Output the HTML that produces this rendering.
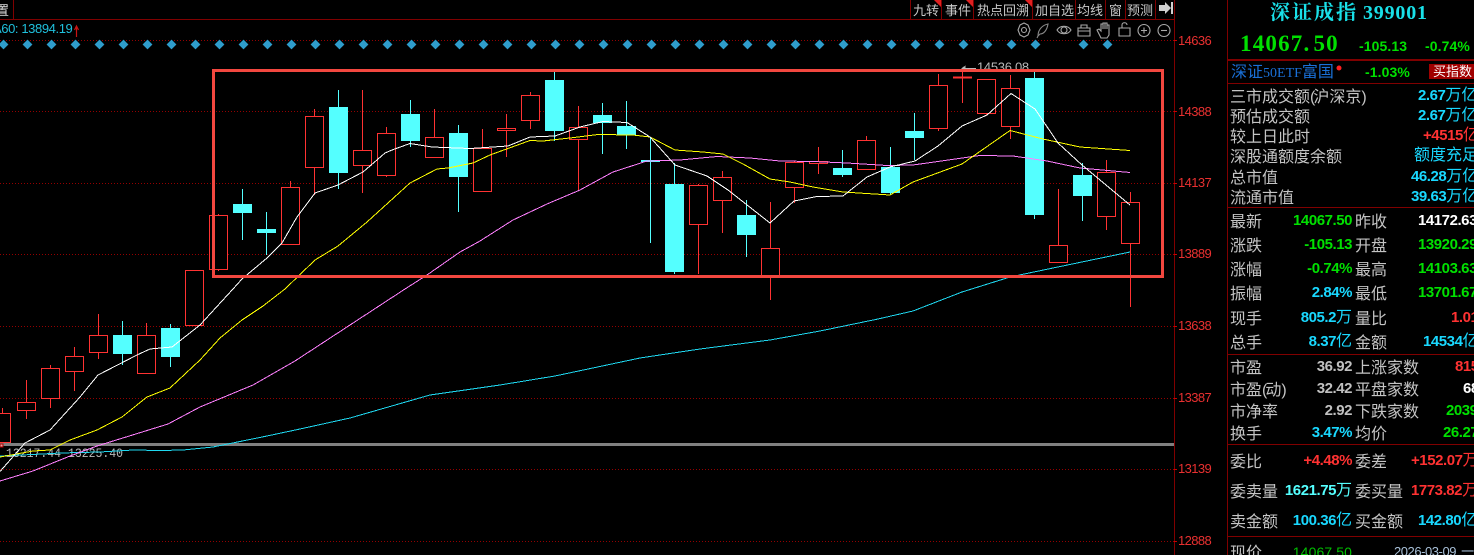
<!DOCTYPE html>
<html><head><meta charset="utf-8"><style>
html,body{margin:0;padding:0;background:#000;width:1474px;height:555px;overflow:hidden}
#p{position:relative;width:1474px;height:555px;overflow:hidden;background:#000;font-family:"Liberation Sans","WenQuanYi Zen Hei","Noto Sans CJK SC",sans-serif}
svg{position:absolute;left:0;top:0}
.t,.l,.v,.w{position:absolute;white-space:nowrap;line-height:18px;height:18px}
.t{font-size:13px;color:#c8c8c8;top:2px}
.l{left:1230px;font-size:16px;color:#c4c4c4;margin-top:2px}
.l u{text-decoration:none;letter-spacing:-2px}
.m{left:1355px}
.v,.w{font-size:15px;font-weight:bold;letter-spacing:-.45px}
.v{right:122px}
.v i,.w i{font-style:normal;font-weight:normal;font-size:16px;letter-spacing:0}
.a{position:absolute;left:1178px;font-size:13px;letter-spacing:-.6px;color:#e83030;line-height:14px}
.g{color:#00e000}.c{color:#19d8ff}.r{color:#ff3232}.s{color:#c0c0c0}.k{color:#fff}.q{color:#55ffff}
</style></head><body><div id="p">
<svg width="1474" height="555" viewBox="0 0 1474 555">
<g stroke="#940000" stroke-dasharray="1 2" shape-rendering="crispEdges">
<path d="M0 40.500H1174M0 111.500H1174M0 183.500H1174M0 254.500H1174M0 326.500H1174M0 398.500H1174M0 469.500H1174M0 541.500H1174"/>
</g>
<path fill="#2f9ccb" stroke="#2f9ccb" stroke-width=".6" d="M3.500 40l4.500 4.500-4.500 4.500-4.500-4.500zM27.500 40l4.500 4.500-4.500 4.500-4.500-4.500zM51.500 40l4.500 4.500-4.500 4.500-4.500-4.500zM75.500 40l4.500 4.500-4.500 4.500-4.500-4.500zM99.500 40l4.500 4.500-4.500 4.500-4.500-4.500zM123.500 40l4.500 4.500-4.500 4.500-4.500-4.500zM147.500 40l4.500 4.500-4.500 4.500-4.500-4.500zM171.500 40l4.500 4.500-4.500 4.500-4.500-4.500zM195.500 40l4.500 4.500-4.500 4.500-4.500-4.500zM219.500 40l4.500 4.500-4.500 4.500-4.500-4.500zM243.500 40l4.500 4.500-4.500 4.500-4.500-4.500zM267.500 40l4.500 4.500-4.500 4.500-4.500-4.500zM291.500 40l4.500 4.500-4.500 4.500-4.500-4.500zM315.500 40l4.500 4.500-4.500 4.500-4.500-4.500zM339.500 40l4.500 4.500-4.500 4.500-4.500-4.500zM363.500 40l4.500 4.500-4.500 4.500-4.500-4.500zM387.500 40l4.500 4.500-4.500 4.500-4.500-4.500zM411.500 40l4.500 4.500-4.500 4.500-4.500-4.500zM435.500 40l4.500 4.500-4.500 4.500-4.500-4.500zM459.500 40l4.500 4.500-4.500 4.500-4.500-4.500zM483.500 40l4.500 4.500-4.500 4.500-4.500-4.500zM507.500 40l4.500 4.500-4.500 4.500-4.500-4.500zM531.500 40l4.500 4.500-4.500 4.500-4.500-4.500zM555.500 40l4.500 4.500-4.500 4.500-4.500-4.500zM579.500 40l4.500 4.500-4.500 4.500-4.500-4.500zM603.500 40l4.500 4.500-4.500 4.500-4.500-4.500zM627.500 40l4.500 4.500-4.500 4.500-4.500-4.500zM651.500 40l4.500 4.500-4.500 4.500-4.500-4.500zM675.500 40l4.500 4.500-4.500 4.500-4.500-4.500zM699.500 40l4.500 4.500-4.500 4.500-4.500-4.500zM723.500 40l4.500 4.500-4.500 4.500-4.500-4.500zM747.500 40l4.500 4.500-4.500 4.500-4.500-4.500zM771.500 40l4.500 4.500-4.500 4.500-4.500-4.500zM795.500 40l4.500 4.500-4.500 4.500-4.500-4.500zM819.500 40l4.500 4.500-4.500 4.500-4.500-4.500zM843.500 40l4.500 4.500-4.500 4.500-4.500-4.500zM867.500 40l4.500 4.500-4.500 4.500-4.500-4.500zM891.500 40l4.500 4.500-4.500 4.500-4.500-4.500zM915.500 40l4.500 4.500-4.500 4.500-4.500-4.500zM939.500 40l4.500 4.500-4.500 4.500-4.500-4.500zM963.500 40l4.500 4.500-4.500 4.500-4.500-4.500zM987.500 40l4.500 4.500-4.500 4.500-4.500-4.500zM1011.500 40l4.500 4.500-4.500 4.500-4.500-4.500zM1035.500 40l4.500 4.500-4.500 4.500-4.500-4.500zM1083.500 40l4.500 4.500-4.500 4.500-4.500-4.500zM1107.500 40l4.500 4.500-4.500 4.500-4.500-4.500z"/>

<rect x="0" y="443" width="1174" height="3" fill="#808080"/>
<text x="6" y="457" font-family="Liberation Mono,monospace" font-size="13" fill="#b8b8b8" textLength="117" lengthAdjust="spacingAndGlyphs">13217.44 13225.40</text>
<rect x="0" y="444" width="3" height="3" fill="#e8a0a0" stroke="#a00" stroke-width="1" shape-rendering="crispEdges"/>
<text x="977" y="71.500" font-family="Liberation Sans,sans-serif" font-size="13" letter-spacing="-.3" fill="#b8b8b8">14536.08</text>
<path d="M962 68.500h14M962 68.500l3-2v4z" stroke="#b8b8b8" fill="#b8b8b8" shape-rendering="crispEdges"/>

<path stroke="#ff3232" fill="none" shape-rendering="crispEdges" d="M2.500 408V443M26.500 380V419M50.500 365V408M74.500 347V391M98.500 314V359M146.500 323V374M218.500 214V271M290.500 181V244M314.500 109V195M362.500 90V193M386.500 127V177M434.500 109V158M482.500 129V191M506.500 114V157M530.500 92V129M578.500 106V191M698.500 184V274M722.500 171V233M770.500 202V300M794.500 161V203M818.500 147V174M866.500 136V170M938.500 74V131M962.500 70V103M986.500 79V115M1010.500 75V139M1058.500 189V262M1106.500 160V230M1130.500 192V307"/>
<g fill="#000" stroke="#ff3232" shape-rendering="crispEdges">
<rect x="-7.500" y="413.500" width="18" height="29"/><rect x="17.500" y="402.500" width="18" height="8"/><rect x="41.500" y="368.500" width="18" height="30"/><rect x="65.500" y="356.500" width="18" height="15"/><rect x="89.500" y="335.500" width="18" height="17"/><rect x="137.500" y="335.500" width="18" height="38"/><rect x="185.500" y="270.500" width="18" height="55"/><rect x="209.500" y="215.500" width="18" height="54"/><rect x="281.500" y="187.500" width="18" height="57"/><rect x="305.500" y="116.500" width="18" height="51"/><rect x="353.500" y="150.500" width="18" height="15"/><rect x="377.500" y="133.500" width="18" height="42"/><rect x="425.500" y="137.500" width="18" height="20"/><rect x="473.500" y="148.500" width="18" height="43"/><rect x="497.500" y="128.500" width="18" height="2"/><rect x="521.500" y="95.500" width="18" height="25"/><rect x="569.500" y="127.500" width="18" height="12"/><rect x="689.500" y="185.500" width="18" height="39"/><rect x="713.500" y="177.500" width="18" height="23"/><rect x="761.500" y="248.500" width="18" height="28"/><rect x="785.500" y="162.500" width="18" height="25"/><rect x="809.500" y="161.500" width="18" height="2"/><rect x="857.500" y="140.500" width="18" height="29"/><rect x="929.500" y="85.500" width="18" height="43"/><rect x="953.500" y="77" width="18" height="1" /><rect x="977.500" y="79.500" width="18" height="34"/><rect x="1001.500" y="88.500" width="18" height="38"/><rect x="1049.500" y="245.500" width="18" height="17"/><rect x="1097.500" y="172.500" width="18" height="44"/><rect x="1121.500" y="202.500" width="18" height="41"/>
</g>
<path stroke="#54ffff" fill="none" shape-rendering="crispEdges" d="M122.500 321V365M170.500 324V367M242.500 189V240M266.500 212V255M338.500 90V189M410.500 100V147M458.500 125V212M554.500 72V141M602.500 103V154M626.500 101V149M650.500 137V243M674.500 163V274M746.500 200V257M842.500 150V177M890.500 147V195M914.500 113V160M1034.500 72V219M1082.500 163V221"/>
<g fill="#54ffff" shape-rendering="crispEdges">
<rect x="113" y="335" width="19" height="19"/><rect x="161" y="328" width="19" height="29"/><rect x="233" y="204" width="19" height="9"/><rect x="257" y="229" width="19" height="4"/><rect x="329" y="107" width="19" height="66"/><rect x="401" y="114" width="19" height="27"/><rect x="449" y="133" width="19" height="44"/><rect x="545" y="80" width="19" height="51"/><rect x="593" y="115" width="19" height="8"/><rect x="617" y="126" width="19" height="9"/><rect x="641" y="160" width="19" height="2"/><rect x="665" y="184" width="19" height="88"/><rect x="737" y="215" width="19" height="20"/><rect x="833" y="168" width="19" height="7"/><rect x="881" y="167" width="19" height="26"/><rect x="905" y="131" width="19" height="7"/><rect x="1025" y="78" width="19" height="137"/><rect x="1073" y="175" width="19" height="21"/>
</g>
<g fill="none" shape-rendering="crispEdges">
<polyline stroke="#1fd8f0" points="0,456 43,454 60,453 100,452 133,450 160,450.500 183,450 213,447 267,436 300,429 350,418 430,395 500,385 555,376 640,358 700,349 770,340 820,331 878,319 913,311 962,292 1010,277 1053,268 1130,252"/>
<polyline stroke="#ff80ff" points="0,481 33,471 70,456 97,446 168,424 200,407 253,385 295,361 350,325 405,289 427,275 460,252 480,241 513,220 547,204 580,190 613,172 647,161 680,160 717,156.500 750,158 780,161 813,161.500 847,163 887,165.500 913,165 980,155.500 1013,156 1047,161 1080,168 1130,172.500"/>
<polyline stroke="#ffff00" points="0,457 33,451 50,450 70,440 97,430 122,417 147,397 170,388 200,360 220,338 242,320 263,306 285,289 315,260 338,246 367,222 410,183 437,169 448,168 473,163 490,155 530,140.500 543,141 570,138 598,134.500 633,135 650,137 675,150 703,152 723,154 743,164 770,179 790,182 813,187 843,192 890,195 913,182 962,164 1010,130.500 1043,139 1080,147 1130,150.500"/>
<polyline stroke="#ffffff" points="0,471.500 25,443 50,430 80,397 98,375 137,355 150,349 172,347 200,325 233,289 242,279 267,258 282,243 297,217 315,193 338,185 363,172 385,153 392,150 410,143.500 432,147 470,148.500 508,146 530,137 555,136 580,127 603,121.500 627,122.500 650,137 675,165 707,176 728,190 770,223 794,201 817,196.500 843,196 867,177 890,167 915,161 938,146 962,126 987,115 1011,93.500 1035,109 1058,143 1082,165 1130,205"/>
</g>
<rect x="213.500" y="70.500" width="949" height="206" fill="none" stroke="#f2473f" stroke-width="3"/>

<g stroke="#800000" fill="none" shape-rendering="crispEdges">
<path d="M0 19.500H1174M13.500 0V19M910.500 0V19M941.500 0V19M973.500 0V19M1032.500 0V19M1075.500 0V19M1105.500 0V19M1125.500 0V19M1155.500 0V19M1174.500 0V555M1227.500 0V555M1228 59.500H1474M1228 60.500H1474M1228 83.500H1474M1228 207.500H1474M1228 354.500H1474M1228 444.500H1474M1228 536.500H1474"/>
</g>
<path fill="#e02020" d="M934 0h7v7zM966 0h7v7zM1025 0h7v7z"/>
<path fill="#d0d0d0" d="M1159 5h6V2l6 6-6 6v-3h-6zM1171 2h2v12h-2z"/>
<path fill="#c00" d="M1174 40h3v1h-3zM1174 111h3v1h-3zM1174 183h3v1h-3zM1174 254h3v1h-3zM1174 326h3v1h-3zM1174 398h3v1h-3zM1174 469h3v1h-3zM1174 541h3v1h-3z"/>
<path d="M76.500 27V37M74.500 30l2-4 2 4" stroke="#c81414" stroke-width="1.200" fill="none"/>
<g fill="none" stroke="#a8a8a8" stroke-width="1.100">
<path d="M1020 25l4-2 4 2 2 5-2 5-4 2-4-2-2-5z"/><circle cx="1024" cy="30" r="2.500"/>
<path d="M1038 36c0-7 5-11 10-12-1 6-4 10-8 10zM1038 36l-1 2" stroke="#888"/>
<path d="M1057 30c3-5 11-5 14 0-3 5-11 5-14 0z"/><circle cx="1064" cy="30" r="3"/>
<path d="M1078 28h12v8h-12zM1081 28v-3h6v3M1078 31h12"/>
<path d="M1100 36l-3-6 2-1 2 2v-7h2v5-6h2v6-6h2v6-4h2v10l-2 3h-6z"/>
<path d="M1119 28h11v8h-11zM1122 28v-3c0-3 5-3 5 0"/>
<circle cx="1144" cy="30.500" r="6"/><path d="M1141 30.500h6M1144 27.500v6"/>
<circle cx="1164" cy="30.500" r="6"/><path d="M1161 30.500h6"/>
</g>
<circle cx="1339" cy="68" r="2.500" fill="#ff2020"/>
<rect x="1429" y="64" width="45" height="15" fill="#a00000"/>
</svg>

<div class="t" style="left:-4px;color:#ddd">置</div>
<div class="t" style="left:913px">九转</div><div class="t" style="left:945px">事件</div><div class="t" style="left:977px">热点回溯</div><div class="t" style="left:1035px">加自选</div><div class="t" style="left:1077px">均线</div><div class="t" style="left:1109px">窗</div><div class="t" style="left:1127px">预测</div>
<div style="position:absolute;left:-7px;top:21px;font-size:13px;letter-spacing:-.4px;line-height:16px;color:#1fc0dc;white-space:nowrap">A60: 13894.19</div>

<div class="a" style="top:34px">14636</div><div class="a" style="top:105px">14388</div><div class="a" style="top:176px">14137</div><div class="a" style="top:247px">13889</div><div class="a" style="top:319px">13638</div><div class="a" style="top:391px">13387</div><div class="a" style="top:462px">13139</div><div class="a" style="top:534px">12888</div>

<div style="position:absolute;left:1270px;top:1px;line-height:24px;font-family:'Liberation Serif','Noto Serif CJK SC',serif;font-weight:bold;font-size:20px;color:#19e0e8;white-space:nowrap"><span style="letter-spacing:2px">深证成指</span><span style="margin-left:5px;letter-spacing:.8px">399001</span></div>
<div style="position:absolute;left:1240px;top:31px;line-height:26px;font-family:'Liberation Serif',serif;font-weight:bold;font-size:23px;letter-spacing:1.2px;color:#00e000;white-space:nowrap">14067.<span style="margin-left:3px">50</span></div>
<div class="w g" style="left:1359px;top:37px;font-size:14px;letter-spacing:.1px">-105.13</div><div class="w g" style="left:1425px;top:37px;font-size:14px;letter-spacing:.1px">-0.74%</div>
<div style="position:absolute;left:1231px;top:64px;line-height:18px;font-size:16px;color:#1a70d8;white-space:nowrap">深证<span style="font-family:'Liberation Serif',serif;font-size:14px">50ETF</span>富国</div>
<div class="w g" style="left:1365px;top:63px;font-size:14px;letter-spacing:.1px">-1.03%</div>
<div style="position:absolute;left:1433px;top:64px;line-height:15px;font-size:13px;color:#fff;white-space:nowrap">买指数</div>

<div class="l" style="top:87px">三市成交额<u>(</u>沪深京<u>)</u></div><div class="w c" style="left:1418px;top:87px">2.67<i>万亿</i></div>
<div class="l" style="top:107px">预估成交额</div><div class="w c" style="left:1418px;top:107px">2.67<i>万亿</i></div>
<div class="l" style="top:127px">较上日此时</div><div class="w r" style="left:1423px;top:127px">+4515<i>亿</i></div>
<div class="l" style="top:147px">深股通额度余额</div><div class="w c" style="left:1414px;top:147px"><i>额度充足</i></div>
<div class="l" style="top:168px">总市值</div><div class="w c" style="left:1411px;top:168px">46.28<i>万亿</i></div>
<div class="l" style="top:188px">流通市值</div><div class="w c" style="left:1411px;top:188px">39.63<i>万亿</i></div>

<div class="l" style="top:212px">最新</div><div class="v g" style="top:212px">14067.50</div><div class="l m" style="top:212px">昨收</div><div class="w k" style="left:1418px;top:212px">14172.63</div>
<div class="l" style="top:236px">涨跌</div><div class="v g" style="top:236px">-105.13</div><div class="l m" style="top:236px">开盘</div><div class="w g" style="left:1418px;top:236px">13920.29</div>
<div class="l" style="top:260px">涨幅</div><div class="v g" style="top:260px">-0.74%</div><div class="l m" style="top:260px">最高</div><div class="w g" style="left:1418px;top:260px">14103.63</div>
<div class="l" style="top:284px">振幅</div><div class="v c" style="top:284px">2.84%</div><div class="l m" style="top:284px">最低</div><div class="w g" style="left:1418px;top:284px">13701.67</div>
<div class="l" style="top:309px">现手</div><div class="v c" style="top:309px">805.2<i>万</i></div><div class="l m" style="top:309px">量比</div><div class="w r" style="left:1451px;top:309px">1.01</div>
<div class="l" style="top:333px">总手</div><div class="v c" style="top:333px">8.37<i>亿</i></div><div class="l m" style="top:333px">金额</div><div class="w c" style="left:1423px;top:333px">14534<i>亿</i></div>

<div class="l" style="top:358px">市盈</div><div class="v s" style="top:358px">36.92</div><div class="l m" style="top:358px">上涨家数</div><div class="w r" style="left:1455px;top:358px">815</div>
<div class="l" style="top:380px">市盈<u>(</u>动<u>)</u></div><div class="v s" style="top:380px">32.42</div><div class="l m" style="top:380px">平盘家数</div><div class="w k" style="left:1463px;top:380px">68</div>
<div class="l" style="top:402px">市净率</div><div class="v s" style="top:402px">2.92</div><div class="l m" style="top:402px">下跌家数</div><div class="w g" style="left:1446px;top:402px">2039</div>
<div class="l" style="top:424px">换手</div><div class="v c" style="top:424px">3.47%</div><div class="l m" style="top:424px">均价</div><div class="w g" style="left:1443px;top:424px">26.27</div>

<div class="l" style="top:452px">委比</div><div class="v r" style="top:452px">+4.48%</div><div class="l m" style="top:452px">委差</div><div class="w r" style="left:1411px;top:452px">+152.07<i>万</i></div>
<div class="l" style="top:482px">委卖量</div><div class="v q" style="top:482px">1621.75<i>万</i></div><div class="l m" style="top:482px">委买量</div><div class="w r" style="left:1411px;top:482px">1773.82<i>万</i></div>
<div class="l" style="top:512px">卖金额</div><div class="v c" style="top:512px">100.36<i>亿</i></div><div class="l m" style="top:512px">买金额</div><div class="w c" style="left:1418px;top:512px">142.80<i>亿</i></div>
<div class="l" style="top:543px">现价</div><div class="v" style="top:543px;font-size:14px;letter-spacing:.1px;font-weight:normal;color:#00c000">14067.50</div><div class="w" style="left:1394px;top:543px;font-size:13px;font-weight:normal;letter-spacing:-.45px;color:#a8c0d8">2026-03-09 <span style="margin-left:2px">一</span></div>
</div></body></html>
